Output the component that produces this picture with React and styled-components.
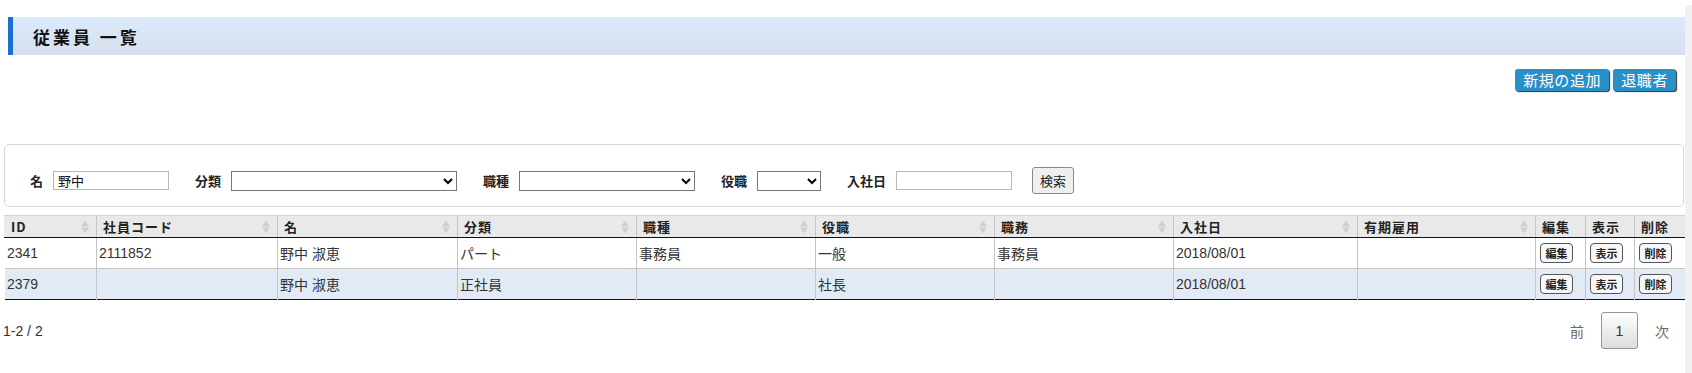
import React from "react";
import styled, { createGlobalStyle } from "styled-components";

const GlobalStyle = createGlobalStyle`
  html, body { margin: 0; padding: 0; background: #fff; }
  body {
    font-family: "Liberation Sans", "Noto Sans CJK JP", sans-serif;
    color: #333;
    font-size: 14px;
  }
  * { box-sizing: border-box; }
`;

const Page = styled.div`
  display: flex;
  width: 1692px;
`;

const Main = styled.div`
  width: 1685px;
  display: flex;
  flex-direction: column;
`;

const ScrollStrip = styled.div`
  width: 7px;
  margin-top: 5px;
  min-height: 368px;
  background: #f1f1f1;
`;

const TitleBar = styled.h1`
  margin: 17px 0 0 8px;
  height: 38px;
  display: flex;
  align-items: center;
  padding-left: 20px;
  border-left: 5px solid #1b6fd1;
  background: linear-gradient(#dbeaf9, #d6e0f1);
  font-family: "Noto Sans CJK JP", sans-serif;
  font-size: 17px;
  font-weight: 700;
  letter-spacing: 3px;
  color: #111;
`;

const ActionRow = styled.div`
  display: flex;
  justify-content: flex-end;
  gap: 4px;
  margin-top: 14px;
  padding-right: 9px;
`;

const ActionButton = styled.button`
  height: 22px;
  padding: 0 8px;
  border: none;
  border-radius: 3px;
  background: #2b8fc7;
  color: #fff;
  font-family: "Noto Sans CJK JP", sans-serif;
  font-size: 15px;
  letter-spacing: 0.6px;
  line-height: 22px;
  box-shadow: 1px 1px 1px #333;
  cursor: pointer;
`;

const SearchPanel = styled.div`
  margin: 53px 0 0 4px;
  width: 1680px;
  border: 1px solid #d8d8d8;
  border-radius: 5px;
  padding: 22px 25px 12px;
  display: flex;
  align-items: center;
  gap: 26px;
`;

const Field = styled.label`
  display: flex;
  align-items: center;
  gap: 10px;
`;

const FieldLabel = styled.span`
  font-family: "Noto Sans CJK JP", sans-serif;
  font-size: 13px;
  font-weight: 700;
  color: #222;
`;

const TextInput = styled.input`
  width: ${(p) => p.$w}px;
  height: 19px;
  border: 1px solid #b8b8b8;
  padding: 0 4px;
  font-family: "Noto Sans CJK JP", sans-serif;
  font-size: 13px;
  color: #111;
  outline: none;
`;

const Select = styled.select`
  width: ${(p) => p.$w}px;
  height: 20px;
  border: 1px solid #767676;
  border-radius: 0;
  background: #fff;
  font-size: 13px;
`;

const SearchButton = styled.button`
  height: 27px;
  padding: 0 7px;
  margin-left: -6px;
  border: 1px solid #8a8a8a;
  border-radius: 3px;
  background: #efefef;
  font-family: "Noto Sans CJK JP", sans-serif;
  font-size: 13px;
  color: #222;
`;

const Table = styled.table`
  margin: 8px 0 0 4px;
  width: 1680px;
  table-layout: fixed;
  border-collapse: collapse;
  border-bottom: 1px solid #111;
`;

const Th = styled.th`
  position: relative;
  height: 22px;
  padding: 0 16px 0 6px;
  background: #e9e9e9;
  border-top: 1px solid #d4d4d4;
  border-left: 1px solid ${(p) => (p.$first ? "#e9e9e9" : "#c4c4c4")};
  border-bottom: 1px solid #111;
  text-align: left;
  font-family: "Noto Sans CJK JP", sans-serif;
  font-size: 13px;
  font-weight: 700;
  letter-spacing: 1px;
  color: #222;
  white-space: nowrap;
`;

const SortIcon = styled.span`
  position: absolute;
  right: 7px;
  top: 50%;
  transform: translateY(-50%);
  display: flex;
  flex-direction: column;
  gap: 1px;
  &::before,
  &::after {
    content: "";
    display: block;
    border-left: 4px solid transparent;
    border-right: 4px solid transparent;
  }
  &::before { border-bottom: 6px solid #cfcfcf; }
  &::after { border-top: 6px solid #cfcfcf; }
`;

const Tr = styled.tr`
  background: ${(p) => (p.$alt ? "#e2eaf6" : "#fff")};
  border-top: 1px solid #c4c4c4;
`;

const Td = styled.td`
  height: 31px;
  padding: 0 2px;
  border-left: 1px solid ${(p) => (p.$first ? "transparent" : "#c4c4c4")};
  font-family: "Liberation Sans", "Noto Sans CJK JP", sans-serif;
  font-size: 14px;
  color: #333;
  white-space: nowrap;
  overflow: hidden;
`;

const ButtonCell = styled(Td)`
  padding: 0 4px;
`;

const CellButton = styled.button`
  width: 33px;
  height: 20px;
  padding: 0;
  border: 1px solid #555;
  border-radius: 4px;
  background: #f7f7f7;
  font-family: "Noto Sans CJK JP", sans-serif;
  font-size: 11px;
  font-weight: 700;
  color: #222;
  line-height: 18px;
`;

const Footer = styled.div`
  display: flex;
  justify-content: space-between;
  align-items: center;
  margin: 12px 0 0 3px;
`;

const Info = styled.div`
  font-size: 14px;
  color: #333;
`;

const Pager = styled.div`
  display: flex;
  align-items: center;
  gap: 1px;
`;

const PageLink = styled.span`
  padding: 0 16px;
  font-family: "Noto Sans CJK JP", sans-serif;
  font-size: 14px;
  color: #666;
`;

const PageCurrent = styled.span`
  width: 37px;
  height: 37px;
  display: flex;
  align-items: center;
  justify-content: center;
  border: 1px solid #979797;
  border-radius: 3px;
  background: linear-gradient(#fff, #dcdcdc);
  font-size: 14px;
  color: #333;
`;

const columns = [
  { key: "id", label: "ID", w: 92, sort: true },
  { key: "code", label: "社員コード", w: 181, sort: true },
  { key: "name", label: "名", w: 180, sort: true },
  { key: "type", label: "分類", w: 179, sort: true },
  { key: "job", label: "職種", w: 179, sort: true },
  { key: "role", label: "役職", w: 179, sort: true },
  { key: "duty", label: "職務", w: 179, sort: true },
  { key: "date", label: "入社日", w: 184, sort: true },
  { key: "fixed", label: "有期雇用", w: 178, sort: true },
  { key: "edit", label: "編集", w: 50 },
  { key: "view", label: "表示", w: 49 },
  { key: "del", label: "削除", w: 50 },
];

const rows = [
  { id: "2341", code: "2111852", name: "野中 淑恵", type: "パート", job: "事務員", role: "一般", duty: "事務員", date: "2018/08/01", fixed: "" },
  { id: "2379", code: "", name: "野中 淑恵", type: "正社員", job: "", role: "社長", duty: "", date: "2018/08/01", fixed: "" },
];

const dataKeys = ["id", "code", "name", "type", "job", "role", "duty", "date", "fixed"];

export default function App() {
  return (
    <>
      <GlobalStyle />
      <Page>
        <Main>
          <TitleBar>従業員 一覧</TitleBar>
          <ActionRow>
            <ActionButton>新規の追加</ActionButton>
            <ActionButton>退職者</ActionButton>
          </ActionRow>

          <SearchPanel>
            <Field>
              <FieldLabel>名</FieldLabel>
              <TextInput $w={116} defaultValue="野中" />
            </Field>
            <Field>
              <FieldLabel>分類</FieldLabel>
              <Select $w={226}><option></option></Select>
            </Field>
            <Field>
              <FieldLabel>職種</FieldLabel>
              <Select $w={176}><option></option></Select>
            </Field>
            <Field>
              <FieldLabel>役職</FieldLabel>
              <Select $w={64}><option></option></Select>
            </Field>
            <Field>
              <FieldLabel>入社日</FieldLabel>
              <TextInput $w={116} />
            </Field>
            <SearchButton>検索</SearchButton>
          </SearchPanel>

          <Table>
            <colgroup>
              {columns.map((c) => (
                <col key={c.key} style={{ width: c.w }} />
              ))}
            </colgroup>
            <thead>
              <tr>
                {columns.map((c, i) => (
                  <Th key={c.key} $first={i === 0}>
                    {c.label}
                    {c.sort && <SortIcon />}
                  </Th>
                ))}
              </tr>
            </thead>
            <tbody>
              {rows.map((r, ri) => (
                <Tr key={r.id} $alt={ri % 2 === 1}>
                  {dataKeys.map((k, i) => (
                    <Td key={k} $first={i === 0}>{r[k]}</Td>
                  ))}
                  <ButtonCell><CellButton>編集</CellButton></ButtonCell>
                  <ButtonCell><CellButton>表示</CellButton></ButtonCell>
                  <ButtonCell><CellButton>削除</CellButton></ButtonCell>
                </Tr>
              ))}
            </tbody>
          </Table>

          <Footer>
            <Info>1-2 / 2</Info>
            <Pager>
              <PageLink>前</PageLink>
              <PageCurrent>1</PageCurrent>
              <PageLink>次</PageLink>
            </Pager>
          </Footer>
        </Main>
        <ScrollStrip />
      </Page>
    </>
  );
}
